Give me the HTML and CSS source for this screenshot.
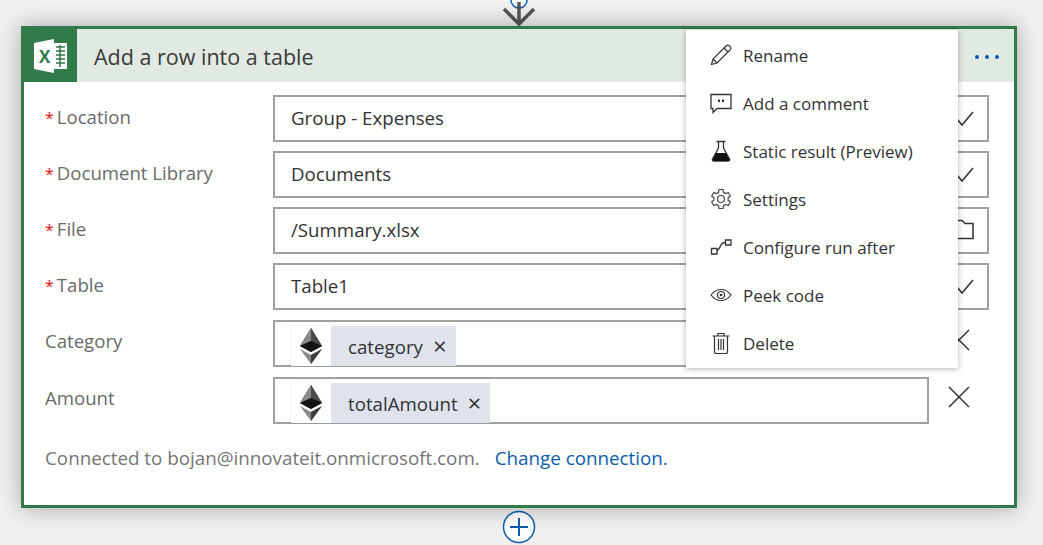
FILE: index.html
```html
<!DOCTYPE html>
<html lang="en">
<head>
<meta charset="utf-8">
<title>Add a row into a table</title>
<link rel="stylesheet" href="styles.css">
</head>
<body>
<svg class="connector-top" width="40" height="26" viewBox="0 0 40 26">
  <path d="M12 0a8 8 0 0 0 16 0" fill="#fff" stroke="#0b5cad" stroke-width="1.500"/>
  <path d="M20 2V23M5 9L20 24L35 9" fill="none" stroke="#555" stroke-width="3.500"/>
</svg>
<section class="card">
  <header class="card-head">
    <div class="logo">
      <svg width="36" height="36" viewBox="0 0 36 36">
        <path d="M1 5L21 1V35L1 31Z" fill="#fff"/>
        <path d="M21 5H34V31H21Z" fill="#fff"/>
        <path d="M23 9H32M23 13H32M23 17H32M23 21H32M23 25H32M27 7V29" stroke="#317a4a" stroke-width="1.500"/>
        <text x="6" y="24.500" class="logo-x">X</text>
      </svg>
    </div>
    <h1 class="title">Add a row into a table</h1>
    <div class="dots"><i></i><i></i><i></i></div>
  </header>
  <div class="form">
    <div class="row">
      <label class="label"><span class="req">*</span>Location</label>
      <div class="input"><span class="value">Group - Expenses</span>
        <svg class="end" width="24" height="24" viewBox="0 0 24 24"><path d="M2 7L12 19L23 6" fill="none" stroke="#333" stroke-width="1.500"/></svg></div>
    </div>
    <div class="row">
      <label class="label"><span class="req">*</span>Document Library</label>
      <div class="input"><span class="value">Documents</span>
        <svg class="end" width="24" height="24" viewBox="0 0 24 24"><path d="M2 7L12 19L23 6" fill="none" stroke="#333" stroke-width="1.500"/></svg></div>
    </div>
    <div class="row">
      <label class="label"><span class="req">*</span>File</label>
      <div class="input"><span class="value">/Summary.xlsx</span>
        <svg class="end" width="24" height="24" viewBox="0 0 24 24"><path d="M1 20.500V2.500H12L15 5.500H23V20.500Z" fill="none" stroke="#333" stroke-width="1.500"/></svg></div>
    </div>
    <div class="row">
      <label class="label"><span class="req">*</span>Table</label>
      <div class="input"><span class="value">Table1</span>
        <svg class="end" width="24" height="24" viewBox="0 0 24 24"><path d="M2 7L12 19L23 6" fill="none" stroke="#333" stroke-width="1.500"/></svg></div>
    </div>
    <div class="row row-token">
      <label class="label label-token">Category</label>
      <div class="input input-short">
        <span class="eth"><svg width="24" height="36" viewBox="0 0 24 36"><path d="M12 0L1 18L12 24L23 18Z" fill="#3c3c3b"/><path d="M12 0L1 18L12 13Z" fill="#8a8a8a"/><path d="M12 0V13L23 18Z" fill="#4a4a4a"/><path d="M1 18L12 13L23 18L12 24Z" fill="#141414"/><path d="M1 21L12 36L23 21L12 27Z" fill="#8a8a8a"/><path d="M12 27V36L23 21Z" fill="#3c3c3b"/></svg></span>
        <span class="token">category<span class="token-x">×</span></span>
      </div>
      <svg class="close" width="22" height="22" viewBox="0 0 22 22"><path d="M1 1L21 21M21 1L1 21" stroke="#333" stroke-width="1.500"/></svg>
    </div>
    <div class="row row-token">
      <label class="label label-token">Amount</label>
      <div class="input input-short">
        <span class="eth"><svg width="24" height="36" viewBox="0 0 24 36"><path d="M12 0L1 18L12 24L23 18Z" fill="#3c3c3b"/><path d="M12 0L1 18L12 13Z" fill="#8a8a8a"/><path d="M12 0V13L23 18Z" fill="#4a4a4a"/><path d="M1 18L12 13L23 18L12 24Z" fill="#141414"/><path d="M1 21L12 36L23 21L12 27Z" fill="#8a8a8a"/><path d="M12 27V36L23 21Z" fill="#3c3c3b"/></svg></span>
        <span class="token">totalAmount<span class="token-x">×</span></span>
      </div>
      <svg class="close" width="22" height="22" viewBox="0 0 22 22"><path d="M1 1L21 21M21 1L1 21" stroke="#333" stroke-width="1.500"/></svg>
    </div>
    <p class="conn">Connected to bojan@innovateit.onmicrosoft.com.<a class="change" href="#">Change connection.</a></p>
  </div>
  <nav class="menu">
    <div class="item"><svg width="22" height="22" viewBox="0 0 22 22"><path d="M1.500 20.500L3 15L16 2C17 1 18.500 1 19.800 2.200C21 3.500 21 5 20 6L7 19ZM3 15L7 19M14 4L18 8" fill="none" stroke="#333" stroke-width="1.200"/></svg><span>Rename</span></div>
    <div class="item"><svg width="22" height="22" viewBox="0 0 22 22"><path d="M1 2.500H21V16.500H7L3 20.500V16.500H1Z" fill="none" stroke="#333" stroke-width="1.300"/><path d="M8 7.500h2v2.500H8zM12 7.500h2v2.500h-2z" fill="#333"/></svg><span>Add a comment</span></div>
    <div class="item"><svg width="22" height="22" viewBox="0 0 22 22"><path d="M6.500 1.500H15.500M8.500 1.500V8L2.500 19C2 20 2.500 21 4 21H18C19.500 21 20 20 19.500 19L13.500 8V1.500" fill="none" stroke="#333" stroke-width="1.300"/><path d="M6 13H16L19.500 20L18 21H4L2.500 20Z" fill="#111"/></svg><span>Static result (Preview)</span></div>
    <div class="item"><svg width="22" height="22" viewBox="0 0 22 22"><circle cx="11" cy="11" r="3.500" fill="none" stroke="#444" stroke-width="1.200"/><path d="M9 1.500H13L13.500 4.300L15.600 5.500L18.300 4.500L20.300 8L18.100 9.800V12.200L20.300 14L18.300 17.500L15.600 16.500L13.500 17.700L13 20.500H9L8.500 17.700L6.400 16.500L3.700 17.500L1.700 14L3.900 12.200V9.800L1.700 8L3.700 4.500L6.400 5.500L8.500 4.300Z" fill="none" stroke="#444" stroke-width="1.200"/></svg><span>Settings</span></div>
    <div class="item"><svg width="22" height="22" viewBox="0 0 22 22"><path d="M1.500 12.500H7V18H1.500ZM15.500 4H21V9H15.500Z" fill="none" stroke="#333" stroke-width="1.300"/><path d="M7 14.500C9 14 9.500 12 11 9C12 7 13 6.500 15.500 6.500" fill="none" stroke="#333" stroke-width="1.300"/></svg><span>Configure run after</span></div>
    <div class="item"><svg width="22" height="22" viewBox="0 0 22 22"><path d="M1 11C4 7 7.500 5.500 11 5.500S18 7 21 11C18 15 14.500 16.500 11 16.500S4 15 1 11Z" fill="none" stroke="#333" stroke-width="1.200"/><circle cx="11" cy="11" r="3.500" fill="none" stroke="#333" stroke-width="1.200"/><circle cx="11" cy="11" r="1.300" fill="#333"/></svg><span>Peek code</span></div>
    <div class="item"><svg width="22" height="22" viewBox="0 0 22 22"><path d="M2.500 4H19.500M8 4V1.500H14V4M4.500 4V20C4.500 21 5 21.500 6 21.500H16C17 21.500 17.500 21 17.500 20V4M8.500 7V18M11 7V18M13.500 7V18" fill="none" stroke="#333" stroke-width="1.200"/></svg><span>Delete</span></div>
  </nav>
</section>
<svg class="plus" width="34" height="34" viewBox="0 0 34 34"><circle cx="17" cy="17" r="15.500" fill="#fff" stroke="#0b5cad" stroke-width="1.500"/><path d="M17 8V26M8 17H26" stroke="#0b5cad" stroke-width="2"/></svg>
</body>
</html>
```

FILE: styles.css
```css
* { box-sizing: border-box; }
html, body { height: 100%; }
body {
  margin: 0;
  background: #f0f0f0;
  font-family: "Open Sans", "Noto Sans", "Liberation Sans", sans-serif;
  color: #333;
  overflow: hidden;
}
.connector-top { display: block; margin-left: 499px; }
.card {
  position: relative;
  width: 996px;
  height: 482px;
  margin-left: 21px;
  background: #fff;
  border: 3px solid #317a4a;
  box-shadow: 0 0 22px rgba(0, 0, 0, .3);
}
.card-head {
  display: flex;
  align-items: center;
  height: 53px;
  background: #e0e9e2;
}
.logo {
  display: flex;
  align-items: center;
  justify-content: center;
  width: 53px;
  height: 53px;
  background: #317a4a;
}
.logo-x { font: 700 17px "Open Sans", sans-serif; fill: #317a4a; }
.title {
  flex: 1;
  margin: 0 0 0 17px;
  padding-top: 2px;
  font-size: 21.500px;
  font-weight: 400;
  color: #3a3a3a;
}
.dots { display: flex; gap: 6px; margin: 2px 15px 0 0; }
.dots i { width: 4px; height: 4px; border-radius: 50%; background: #0b5cad; }
.form { display: flex; flex-direction: column; padding: 13px 25px 0 21px; }
.row { display: flex; align-items: center; flex: none; height: 47px; margin-bottom: 9px; }
.row-token { margin-top: 1px; }
.label { width: 228px; flex: none; padding-bottom: 5px; font-size: 18.600px; color: #6a6a6a; }
.label-token { padding-bottom: 7px; }
.req { color: #e81123; font-size: 16px; margin-right: 3px; }
.input {
  display: flex;
  align-items: center;
  flex: 1;
  height: 47px;
  padding: 0 0 2px 16px;
  border: 2px solid #a0a0a0;
  font-size: 18.700px;
  background: #fff;
}
.input-short { flex: none; width: 656px; align-items: flex-end; padding-bottom: 0; }
.value { flex: 1; color: #333; }
.end { margin-right: 13px; }
.eth {
  display: flex;
  align-items: center;
  justify-content: center;
  width: 40px;
  height: 40px;
  margin-bottom: -1px;
  background: #fff;
  box-shadow: 0 0 1px rgba(0, 0, 0, .25);
}
.token {
  display: flex;
  align-items: center;
  height: 40px;
  margin-bottom: -1px;
  padding: 0 9px 0 17px;
  background: #dfe3ec;
  color: #333;
}
.token-x { margin-left: 10px; font-size: 24px; line-height: 1; }
.close { margin: 0 0 8px 19px; flex: none; }
.conn { margin: 12px 0 0; font-size: 18.800px; color: #767676; }
.change { margin-left: 15px; color: #0b5cad; text-decoration: none; }
.menu {
  position: absolute;
  top: 1px;
  left: 662px;
  width: 272px;
  height: 338px;
  padding-top: 1px;
  background: #fff;
  box-shadow: 0 1px 6px rgba(0, 0, 0, .3);
}
.item {
  display: flex;
  align-items: center;
  gap: 11px;
  height: 48px;
  padding-left: 24px;
  font-size: 17px;
  color: #333;
}
.item svg { flex: none; }
.plus { display: block; margin: 2px 0 0 502px; }
```
